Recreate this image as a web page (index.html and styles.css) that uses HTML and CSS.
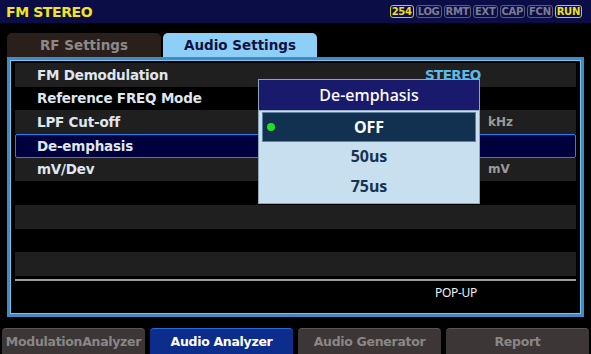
FILE: index.html
```html
<!DOCTYPE html>
<html>
<head>
<meta charset="utf-8">
<link rel="stylesheet" href="styles.css">
</head>
<body>
<div class="screen">
  <div class="header">
    <div class="title">FM STEREO</div>
    <div class="badges">
      <span class="badge on">254</span>
      <span class="badge">LOG</span>
      <span class="badge">RMT</span>
      <span class="badge">EXT</span>
      <span class="badge">CAP</span>
      <span class="badge">FCN</span>
      <span class="badge on">RUN</span>
    </div>
  </div>
  <div class="tabs">
    <div class="tab">RF Settings</div>
    <div class="tab active">Audio Settings</div>
  </div>
  <div class="panel">
    <div class="rows">
      <div class="row odd"><span class="label">FM Demodulation</span><span class="value stereo">STEREO</span></div>
      <div class="row"><span class="label">Reference FREQ Mode</span></div>
      <div class="row odd"><span class="label">LPF Cut-off</span><span class="unit">kHz</span></div>
      <div class="row selected"><span class="label">De-emphasis</span></div>
      <div class="row odd"><span class="label">mV/Dev</span><span class="unit">mV</span></div>
      <div class="row"></div>
      <div class="row odd"></div>
      <div class="row"></div>
      <div class="row odd"></div>
    </div>
    <div class="sep"></div>
    <div class="softkey"><span>POP-UP</span></div>
  </div>
  <div class="buttons">
    <div class="btn">ModulationAnalyzer</div>
    <div class="btn active">Audio Analyzer</div>
    <div class="btn">Audio Generator</div>
    <div class="btn">Report</div>
  </div>
  <div class="popup">
    <div class="popup-title">De-emphasis</div>
    <div class="popup-body">
      <div class="opt sel"><span class="dot"></span>OFF</div>
      <div class="opt">50us</div>
      <div class="opt">75us</div>
    </div>
  </div>
</div>
</body>
</html>
```

FILE: styles.css
```css
html, body {
  margin: 0;
  padding: 0;
  background: #000;
}
.screen {
  position: relative;
  width: 591px;
  height: 354px;
  overflow: hidden;
  background: #000;
  font-family: "DejaVu Sans", Verdana, sans-serif;
}
.header {
  height: 23px;
  background: #0b0d46;
  display: flex;
  align-items: center;
  justify-content: space-between;
  padding: 0 9px 0 6px;
}
.title {
  color: #f4e41c;
  font-weight: bold;
  font-size: 14px;
  letter-spacing: -0.4px;
}
.badges {
  display: flex;
  gap: 2px;
}
.badge {
  border: 1px solid #5c5e78;
  border-radius: 3px;
  color: #7c7e92;
  font-size: 10px;
  font-weight: bold;
  height: 11px;
  line-height: 11px;
  padding: 0 1px;
  letter-spacing: -0.3px;
}
.badge.on {
  border-color: #d8c81a;
  color: #f0e020;
}
.tabs {
  display: flex;
  gap: 2px;
  margin-top: 10px;
  padding-left: 7px;
  height: 24px;
}
.tab {
  width: 154px;
  background: #2b1f1c;
  color: #8c8a88;
  border-radius: 5px 5px 0 0;
  font-weight: bold;
  font-size: 13.5px;
  text-align: center;
  line-height: 25px;
}
.tab.active {
  background: #8ecff7;
  color: #12123e;
}
.panel {
  margin-left: 7px;
  width: 571px;
  height: 251px;
  border: 3px solid #3d8dc4;
  box-shadow: inset 0 0 0 1px #7cc4ee;
  padding: 3px 0 0 0;
}
.rows {
  margin: 0 5px;
}
.row {
  position: relative;
  height: 23.67px;
  display: flex;
  align-items: center;
}
.row.odd {
  background: #1f1f1f;
}
.row.selected {
  background: #00003e;
  border: 1px solid #1c86f0;
  border-radius: 2px;
  box-sizing: border-box;
}
.label {
  color: #dfe6ee;
  font-weight: bold;
  font-size: 13.5px;
  padding-left: 22px;
  letter-spacing: -0.2px;
}
.row.selected .label {
  padding-left: 21px;
}
.value.stereo {
  position: absolute;
  left: 410px;
  color: #5db9ea;
  font-weight: bold;
  font-size: 13.5px;
  letter-spacing: -0.6px;
}
.unit {
  position: absolute;
  left: 473px;
  color: #9a9a9a;
  font-weight: bold;
  font-size: 12px;
}
.sep {
  height: 2px;
  background: #9c9c9c;
  margin: 3px 5px 0;
}
.softkey {
  padding-left: 425px;
  color: #f0f0f0;
  font-family: "Noto Sans", sans-serif;
  font-size: 12px;
  letter-spacing: -0.3px;
  margin-top: 3px;
}
.buttons {
  display: flex;
  gap: 5px;
  padding-left: 2px;
  margin-top: 11px;
}
.btn {
  width: 143px;
  height: 34px;
  background: #3c3636;
  color: #8a8686;
  border-radius: 4px 4px 0 0;
  font-weight: bold;
  font-size: 12.5px;
  text-align: center;
  line-height: 26px;
  box-sizing: border-box;
  border-top: 1px solid #5a5454;
  letter-spacing: -0.3px;
}
.btn.active {
  background: #0c2d8c;
  color: #ffffff;
  border-top: 1px solid #2a6ad8;
}
.popup {
  position: absolute;
  left: 258px;
  top: 79px;
  width: 220px;
  height: 123px;
  border: 1px solid #8fa6b8;
  background: #c8dff0;
  font-family: "Noto Sans", sans-serif;
}
.popup-title {
  height: 30px;
  background: #1a1a6c;
  border-bottom: 1px solid #9ab0c4;
  color: #ffffff;
  font-size: 16px;
  font-weight: 500;
  text-align: center;
  line-height: 30px;
}
.popup-body {
  padding: 1px 3px;
}
.opt {
  position: relative;
  height: 29.5px;
  line-height: 29px;
  text-align: center;
  color: #173352;
  font-size: 16px;
  font-weight: bold;
  box-sizing: border-box;
}
.opt.sel {
  background: #12304f;
  border: 1px solid #5f7f9e;
  color: #ffffff;
  height: 30px;
  line-height: 28px;
}
.dot {
  position: absolute;
  left: 4px;
  top: 10px;
  width: 8px;
  height: 8px;
  border-radius: 50%;
  background: #22e022;
}
```
